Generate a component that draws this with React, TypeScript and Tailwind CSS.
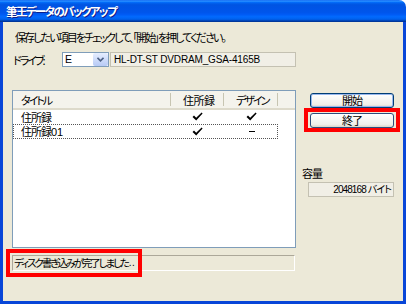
const Check = () => (
  <svg width="11" height="10" viewBox="0 0 11 10">
    <path d="M0.5 5 L2 3.6 L4.2 5.8 L9.6 0.5 L10.6 1.6 L4.2 8.6 Z" fill="#000" />
  </svg>
);

const App = () => {
  return (
    <div className="relative w-[406px] h-[304px] flex flex-col font-['Noto_Sans_CJK_JP',sans-serif] text-[11px] tracking-[-2px] text-black whitespace-nowrap [font-feature-settings:'palt']">
      {/* title bar */}
      <div className="h-[22px] shrink-0 rounded-tr-[7px] bg-[linear-gradient(to_bottom,#0058EE_0%,#3593FF_4%,#288EFF_6%,#127DFF_8%,#036FFC_10%,#0262EE_14%,#0057E5_20%,#0054E3_24%,#0055EB_56%,#005BF5_66%,#026AFE_76%,#0062EF_86%,#0052D6_92%,#0040AB_94%,#003092_100%)] flex items-center pl-[6px]">
        <span className="text-white font-bold text-[11.5px] tracking-[-1.6px] leading-[14px] [text-shadow:1px_1px_0_#0A1E8C]">筆王データのバックアップ</span>
      </div>

      <div className="flex-1 border-x-[3px] border-b-[3px] border-[#0846D8] bg-[#ECE9D8] flex flex-col pl-[9px]">
        <div className="mt-[8px] pl-[3px] h-[14px] leading-[14px] tracking-[-1.9px]">保存したい項目をチェックして、「開始」を押してください。</div>

        {/* drive row */}
        <div className="mt-[8px] flex items-center h-[15px]">
          <span className="w-[50px] pl-[1px] leading-[14px]">ドライブ:</span>
          <div className="w-[47px] h-[15px] border border-[#7F9DB9] bg-white flex items-center justify-between">
            <span className="pl-[2px] leading-[13px] font-['Liberation_Sans',sans-serif] text-[10.5px] tracking-normal">E</span>
            <div className="w-[15px] h-[13px] rounded-[2px] bg-[linear-gradient(to_bottom,#E6EEFF,#B7CAF5)] flex items-center justify-center">
              <svg width="7" height="5" viewBox="0 0 7 5">
                <path d="M0.5 0.8 L3.5 3.8 L6.5 0.8" stroke="#4D6185" strokeWidth="1.6" fill="none" />
              </svg>
            </div>
          </div>
          <div className="ml-[1px] w-[186px] h-[15px] border border-[#C4C1B2] bg-[#F1EFE6] flex items-center pl-[3px]">
            <span className="font-['Liberation_Sans',sans-serif] text-[10px] tracking-[-0.15px] leading-[13px]">HL-DT-ST DVDRAM_GSA-4165B</span>
          </div>
        </div>

        {/* list + right column */}
        <div className="mt-[23px] flex">
          <div className="w-[284px] h-[158px] border border-[#7F9DB9] bg-white flex flex-col">
            <div className="h-[19px] shrink-0 bg-[#F4F3EC] border-b-2 border-[#DDDACB] flex items-center">
              <div className="w-[157px] pl-[8px] leading-[12px]">タイトル</div>
              <div className="w-[1px] h-[13px] bg-[#C7C5B2]" />
              <div className="w-[52px] pl-[12px] leading-[12px] tracking-[-0.5px]">住所録</div>
              <div className="w-[1px] h-[13px] bg-[#C7C5B2]" />
              <div className="w-[53px] pl-[12px] leading-[12px]">デザイン</div>
              <div className="w-[1px] h-[13px] bg-[#C7C5B2]" />
            </div>
            <div className="h-[14px] shrink-0 flex items-center">
              <div className="w-[157px] pl-[8px] leading-[12px] tracking-[-1px]">住所録</div>
              <div className="w-[53px] flex justify-center pl-[2px]"><Check /></div>
              <div className="w-[54px] flex justify-center pl-[3px]"><Check /></div>
            </div>
            <div className="h-[15px] shrink-0 w-[265px] flex items-center border border-dotted border-[#555]">
              <div className="w-[156px] pl-[7px] leading-[12px] tracking-[-1px]">住所録<span className="font-['Liberation_Sans',sans-serif] tracking-normal">01</span></div>
              <div className="w-[53px] flex justify-center pl-[2px]"><Check /></div>
              <div className="w-[54px] flex justify-center pl-[3px]">
                <div className="w-[6px] h-[1px] bg-black" />
              </div>
            </div>
          </div>

          <div className="ml-[6px] flex flex-col">
            <button className="mt-[3px] ml-[8px] w-[84px] h-[15px] rounded-[3px] border border-[#003C74] bg-[linear-gradient(to_bottom,#FFFFFF,#F0EFEA_80%,#D8D4C8)] shadow-[inset_0_0_0_1px_#98B8EE] flex items-center justify-center leading-[13px] tracking-[-1px]">開始</button>
            <button className="mt-[5px] ml-[8px] w-[84px] h-[15px] rounded-[3px] border border-[#2C4C7C] bg-[linear-gradient(to_bottom,#FFFFFF,#F0EFEA_80%,#D8D4C8)] flex items-center justify-center leading-[13px] tracking-[-1px]">終了</button>
            <div className="mt-[38px] h-[14px] leading-[14px] tracking-[-1px]">容量</div>
            <div className="mt-[2px] ml-[6px] w-[86px] h-[15px] border border-[#C4C1B2] bg-[#F1EFE6] flex items-center justify-end pr-[2px]">
              <span className="leading-[13px] font-['Liberation_Sans','Noto_Sans_CJK_JP',sans-serif] text-[10px] tracking-[-0.9px]">2048168 バイト</span>
            </div>
          </div>
        </div>

        {/* status */}
        <div className="mt-[7px] w-[283px] h-[16px] border-t border-l border-[#ACA899] border-b border-b-white border-r border-r-white flex items-center pl-[1px]">
          <span className="leading-[14px] text-[10.5px] tracking-[-2.1px]">ディスク書き込みが完了しました</span>
          <span className="leading-[14px] font-['Liberation_Sans',sans-serif] text-[10px] tracking-[0.5px] pl-[1px]">..</span>
        </div>
      </div>

      {/* annotation boxes */}
      <div className="absolute left-[304px] top-[108px] w-[96px] h-[24px] border-4 border-[#FF0000]" />
      <div className="absolute left-[6px] top-[249px] w-[136px] h-[28px] border-4 border-[#FF0000]" />
    </div>
  );
};

export default App;
